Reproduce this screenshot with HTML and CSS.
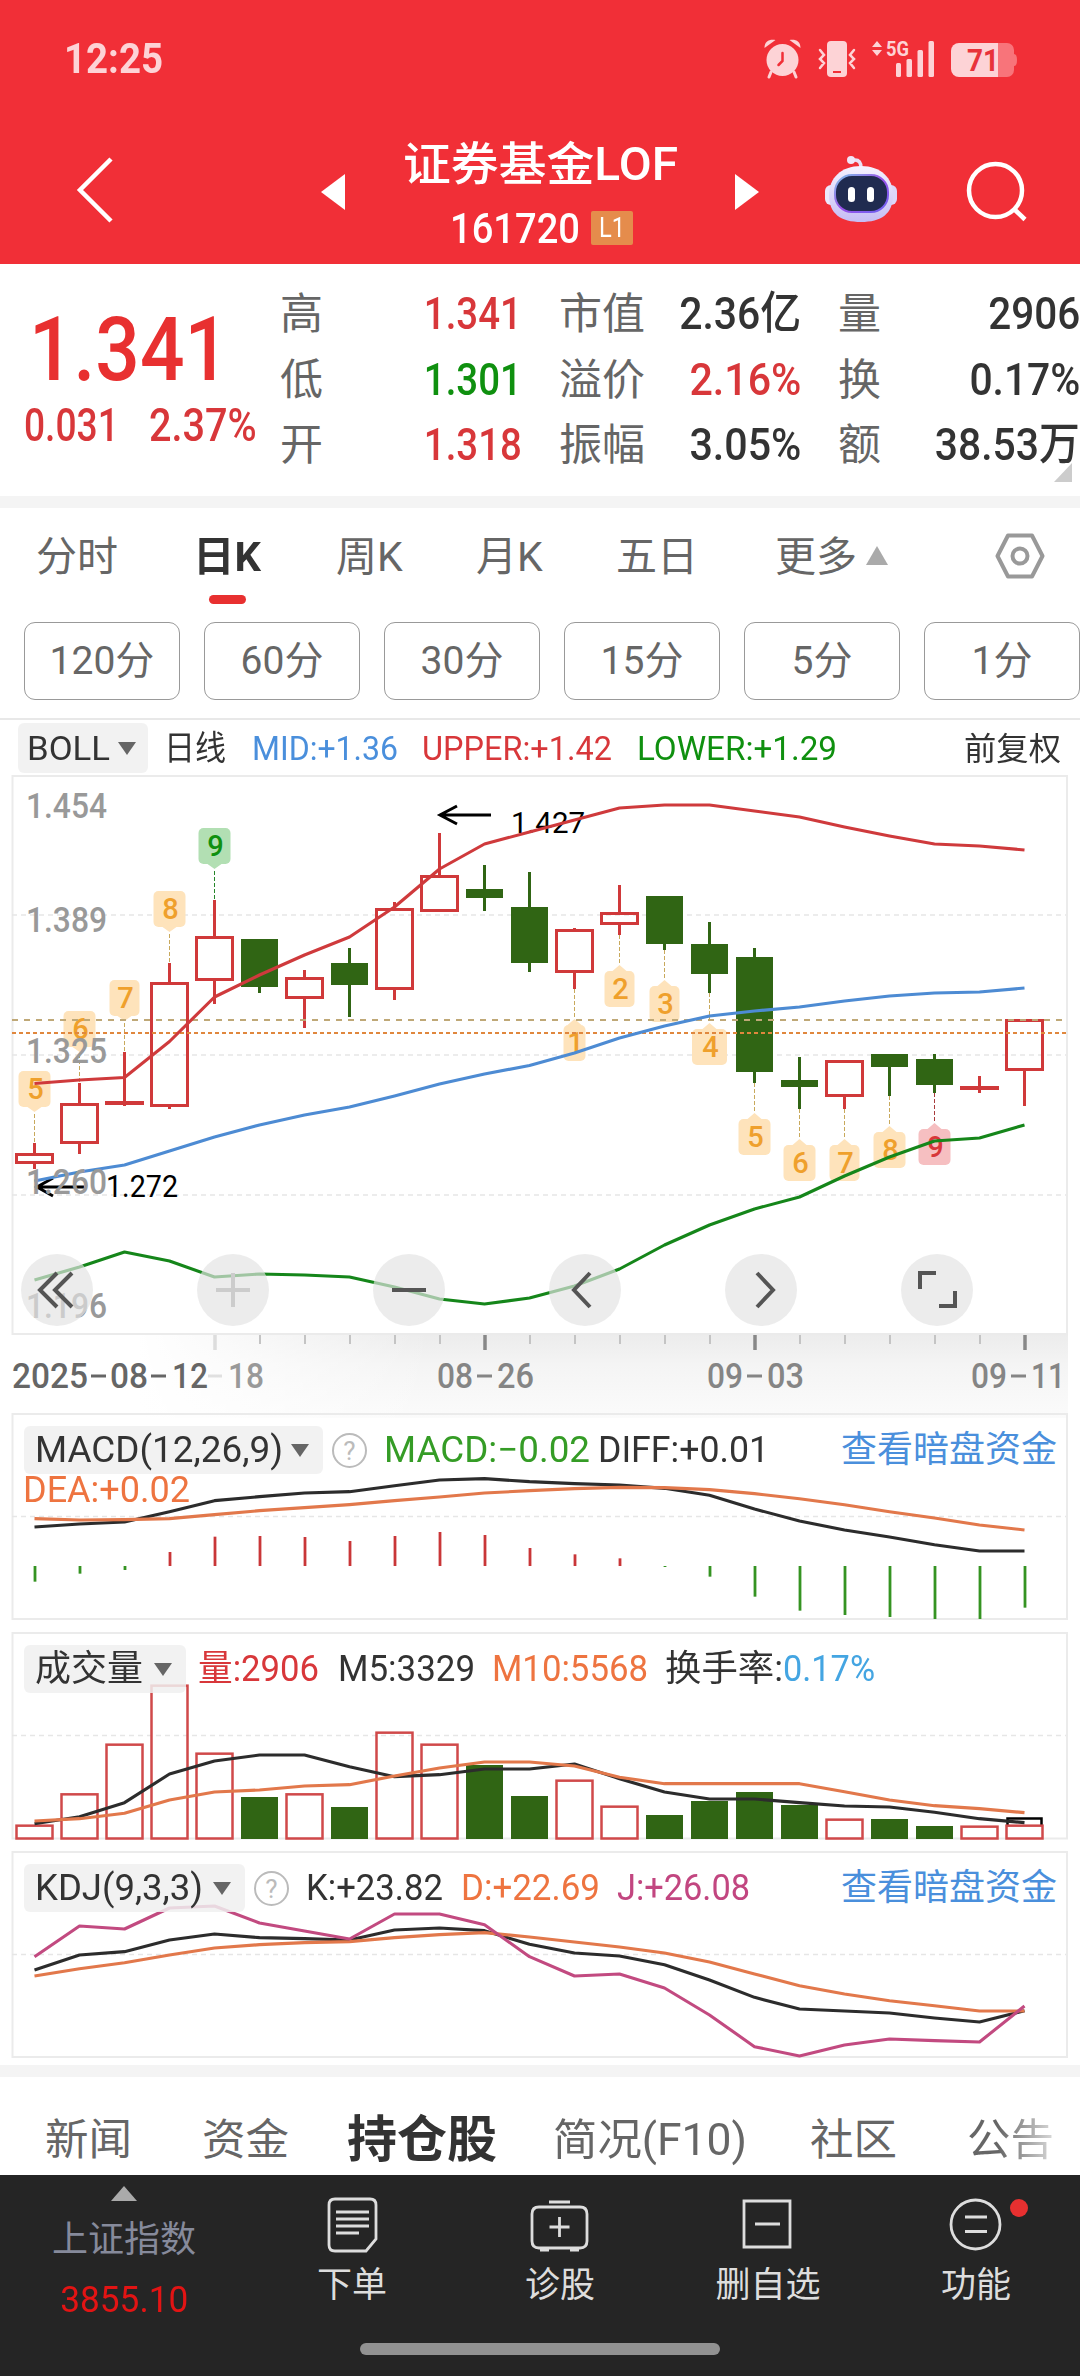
FILE: index.html
```html
<!DOCTYPE html>
<html lang="zh-CN">
<head>
<meta charset="utf-8">
<title>证券基金LOF 161720</title>
<link rel="stylesheet" href="styles.css">
</head>
<body>
<header class="top">
  <div class="status">
    <span class="time" data-w="99">12:25</span>
    <svg class="status-icons" width="260" height="42" viewBox="762 38 260 42">
      <g fill="#fdd3d6">
        <circle cx="782.500" cy="60" r="16"/>
        <path d="M764.500 48c0-7 5-9 11-8zM800.500 48c0-7-5-9-11-8z"/>
        <path d="M771 72l-2 5M794 72l2 5" stroke="#fdd3d6" stroke-width="3" stroke-linecap="round"/>
        <path d="M782.500 53v8l-4 4" fill="none" stroke="#f12f37" stroke-width="2.500" stroke-linecap="round"/>
        <rect x="827" y="41" width="20" height="36" rx="4"/>
        <path d="M833 72h8" stroke="#f12f37" stroke-width="2"/>
        <path d="M820 50l4 5-4 4 4 4-4 5M854 50l-4 5 4 4-4 4 4 5" fill="none" stroke="#fdd3d6" stroke-width="2.500" stroke-linecap="round"/>
        <path d="M872 47l5-6 5 6zM872 50h10l-5 6z"/>
        <rect x="896" y="63" width="5" height="14" rx="1.500"/><rect x="906.500" y="59" width="5.500" height="18" rx="1.500"/><rect x="917.500" y="50" width="5.500" height="27" rx="1.500"/><rect x="928.500" y="41" width="5.500" height="36" rx="1.500"/>
        <text x="886" y="56" font-size="21" font-weight="700" textLength="23" lengthAdjust="spacingAndGlyphs">5G</text>
        <path d="M998 43h9a7 7 0 0 1 7 7v4q3 0 3 6t-3 6v4a7 7 0 0 1-7 7h-9z" fill="#f8747a"/>
        <path d="M998 43h-39a8 8 0 0 0-8 8v18a8 8 0 0 0 8 8h39z"/>
        <text x="967" y="71" font-size="31" font-weight="700" fill="#e8323a" textLength="32" lengthAdjust="spacingAndGlyphs">71</text>
      </g>
    </svg>
  </div>
  <div class="nav">
    <svg class="back" width="42" height="70" viewBox="74 155 42 70"><path d="M111 159L80 190l31 31" fill="none" stroke="#fff" stroke-width="4.500"/></svg>
    <svg class="prev" width="24" height="36"><path d="M24 0v36L0 18z" fill="#fff"/></svg>
    <div class="title">
      <h1><span data-w="275">证券基金LOF</span></h1>
      <p><span class="code"><span data-w="130">161720</span></span><b class="badge"><span data-w="26">L1</span></b></p>
    </div>
    <svg class="next" width="24" height="36"><path d="M0 0v36l24-18z" fill="#fff"/></svg>
    <svg class="robot" width="74" height="68" viewBox="824 155 74 68">
      <defs>
        <linearGradient id="shell" x1="0" y1="0" x2="0" y2="1"><stop offset="0" stop-color="#f6f2ff"/><stop offset="1" stop-color="#c5bcf4"/></linearGradient>
        <linearGradient id="rim" x1="0" y1="0" x2="1" y2="1"><stop offset="0" stop-color="#7fc4e8"/><stop offset=".5" stop-color="#9a50e8"/><stop offset="1" stop-color="#6b62f0"/></linearGradient>
      </defs>
      <path d="M850 160h5q6 0 6 8" fill="none" stroke="#eadff5" stroke-width="3.500"/><circle cx="851" cy="160" r="4" fill="#f0e6f8"/>
      <rect x="825" y="185" width="14" height="20" rx="6" fill="#ece8fb"/><rect x="883" y="185" width="14" height="20" rx="6" fill="#ddd7fa"/>
      <path d="M861 166c20 0 32 12 32 29 0 19-12 27-32 27s-32-8-32-27c0-17 12-29 32-29z" fill="url(#shell)"/>
      <rect x="835" y="175" width="53" height="37" rx="17" fill="#202b50" stroke="url(#rim)" stroke-width="2"/>
      <rect x="848" y="187" width="7" height="15" rx="3.500" fill="#fff"/><rect x="867" y="187" width="7" height="15" rx="3.500" fill="#fff"/>
    </svg>
    <svg class="search" width="62" height="62" viewBox="965 161 62 62"><g fill="none" stroke="#fff" stroke-width="4.500"><circle cx="994.500" cy="190.500" r="26.500"/><path d="M1013.500 209.500L1024 219.500"/></g></svg>
  </div>
</header>

<section class="quote">
  <div class="last">
    <div class="price"><span data-w="200">1.341</span></div>
    <div class="change"><span data-w="101">0.031</span><span data-w="112">2.37%</span></div>
  </div>
  <dl class="stats">
    <dt>高</dt><dd class="red"><span data-w="98">1.341</span></dd><dt>市值</dt><dd><span data-w="122">2.36亿</span></dd><dt>量</dt><dd><span data-w="92">2906</span></dd>
    <dt>低</dt><dd class="green"><span data-w="98">1.301</span></dd><dt>溢价</dt><dd class="red"><span data-w="112">2.16%</span></dd><dt>换</dt><dd><span data-w="111">0.17%</span></dd>
    <dt>开</dt><dd class="red"><span data-w="98">1.318</span></dd><dt>振幅</dt><dd><span data-w="112">3.05%</span></dd><dt>额</dt><dd><span data-w="145">38.53万</span></dd>
  </dl>
  <i class="corner"></i>
</section>

<nav class="periods">
  <span>分时</span><span class="on"><b data-w="68">日K</b></span><span>周K</span><span>月K</span><span>五日</span><span class="more">更多<i></i></span>
  <svg width="52" height="52" viewBox="-26 -26 52 52"><g fill="none" stroke="#999" stroke-linejoin="round"><path d="M-22.500 0L-12-20.500H12L22.500 0 12 20.500H-12z" stroke-width="4"/><circle r="7.500" stroke-width="4"/></g></svg>
</nav>
<div class="minutes">
  <button>120分</button><button>60分</button><button>30分</button><button>15分</button><button>5分</button><button>1分</button>
</div>

<div class="legend boll">
  <div class="chip"><span data-w="83">BOLL</span><i></i></div>
  <span><span data-w="62">日线</span></span><span class="blue"><span data-w="146">MID:+1.36</span></span><span class="red"><span data-w="190">UPPER:+1.42</span></span><span class="green"><span data-w="200">LOWER:+1.29</span></span><span class="adj"><span data-w="97">前复权</span></span>
</div>

<section class="panel kline">
  <svg id="kline" width="1080" height="638" viewBox="0 776 1080 638"></svg>
  <div class="controls">
    <button><svg viewBox="-36 -36 72 72"><path d="M0-17l-17 17 17 17M15-17L-2 0l17 17"/></svg></button>
    <button class="off"><svg viewBox="-36 -36 72 72"><path d="M-17 0h34M0-17v34"/></svg></button>
    <button><svg viewBox="-36 -36 72 72"><path d="M-17 0h34"/></svg></button>
    <button><svg viewBox="-36 -36 72 72"><path d="M5-17l-16 17 16 17"/></svg></button>
    <button><svg viewBox="-36 -36 72 72"><path d="M-4-17l16 17-16 17"/></svg></button>
    <button><svg viewBox="-36 -36 72 72"><path d="M-17-1v-16H-1M18 1v15H2"/></svg></button>
  </div>
</section>

<section class="panel">
  <svg id="macd" width="1080" height="219" viewBox="0 1414 1080 219"></svg>
  <div class="legend macd">
    <div class="chip"><span data-w="248">MACD(12,26,9)</span><i></i></div><em>?</em><span class="leaf"><span data-w="206">MACD:−0.02</span></span><span><span data-w="171">DIFF:+0.01</span></span><a>查看暗盘资金</a>
  </div>
  <div class="dea"><span data-w="167">DEA:+0.02</span></div>
</section>

<section class="panel">
  <svg id="volume" width="1080" height="219" viewBox="0 1633 1080 219"></svg>
  <div class="legend vol">
    <div class="chip"><span data-w="108">成交量</span><i></i></div><span class="red"><span data-w="121">量:2906</span></span><span><span data-w="137">M5:3329</span></span><span class="orange"><span data-w="156">M10:5568</span></span><span><span data-w="118">换手率:</span></span><span class="sky"><span data-w="92">0.17%</span></span>
  </div>
</section>

<section class="panel">
  <svg id="kdj" width="1080" height="213" viewBox="0 1852 1080 213"></svg>
  <div class="legend kdj">
    <div class="chip"><span data-w="168">KDJ(9,3,3)</span><i></i></div><em>?</em><span><span data-w="137">K:+23.82</span></span><span class="orange"><span data-w="139">D:+22.69</span></span><span class="plum"><span data-w="133">J:+26.08</span></span><a>查看暗盘资金</a>
  </div>
</section>

<nav class="sections">
  <span>新闻</span><span>资金</span><b>持仓股</b><span><span data-w="194">简况(F10)</span></span><span>社区</span><span class="fade">公告</span>
</nav>

<footer class="dock">
  <div class="index"><i></i><span>上证指数</span><strong data-w="128">3855.10</strong></div>
  <div class="act"><svg width="64" height="60" viewBox="320 2196 64 60"><path d="M335 2200h35q6 0 6 6v34l-10 12h-31q-6 0-6-6v-40q0-6 6-6zM336 2213h33M336 2220h33M336 2227h33M336 2234h23"/></svg><span>下单</span></div>
  <div class="act"><svg width="64" height="60" viewBox="528 2196 64 60"><path d="M549 2203h21M539 2208h41q7 0 7 7v27q0 7-7 7h-41q-7 0-7-7v-27q0-7 7-7zM540 2251h9M570 2251h9M559.500 2218v20M549.500 2228h20"/></svg><span>诊股</span></div>
  <div class="act"><svg width="64" height="60" viewBox="736 2196 64 60"><path d="M744 2202h46v46h-46zM755 2225h25"/></svg><span>删自选</span></div>
  <div class="act"><svg width="64" height="60" viewBox="944 2196 64 60"><circle cx="975.500" cy="2225.500" r="24.500"/><path d="M965 2218h22M965 2232.500h22"/></svg><span>功能</span><i class="dot"></i></div>
  <div class="home"></div>
</footer>
<script src="chart.js"></script>
</body>
</html>
```
FILE: styles.css
```css
* { box-sizing: border-box; }
body, h1, p, dl, dd { margin: 0; }
body {
  width: 1080px;
  height: 2376px;
  overflow: hidden;
  background: #fff;
  color: #333;
  font-family: Roboto, "Noto Sans CJK SC", sans-serif;
  font-size: 36px;
  white-space: nowrap;
}
button { margin: 0; padding: 0; font: inherit; color: inherit; }
i, em { font-style: normal; }
svg text { font-family: Roboto, "Noto Sans CJK SC", sans-serif; }
[data-w] { display: inline-block; transform-origin: left center; }

.red { color: #d8373a; }
.green { color: #0f900f; }
.blue { color: #4a8fdc; }
.leaf { color: #359c26; }
.orange { color: #ee7440; }
.sky { color: #44a5e2; }
.plum { color: #c24680; }

/* header */
.top { height: 264px; background: #f12f37; color: #fff; }
.status { display: flex; height: 118px; padding: 0 58px 0 64px; justify-content: space-between; align-items: center; }
.time { font-size: 42px; font-weight: 700; line-height: 50px; color: #fdd3d6; }
.nav { display: grid; height: 146px; grid-template-columns: 74px 247px 75px 339px 90px 141px 114px; align-items: start; }
.nav .back { grid-column: 2; margin-top: 37px; }
.nav .prev, .nav .next { margin-top: 56px; }
.nav .robot { margin-top: 37px; margin-left: -1px; }
.nav .search { margin-top: 43px; }
.title { padding-top: 16px; padding-left: 7px; }
.title h1 { height: 63px; font-size: 46px; line-height: 60px; font-weight: 500; }
.title p { display: flex; height: 62px; padding-left: 47px; align-items: center; }
.code { width: 141px; font-size: 43px; font-weight: 500; line-height: 60px; }
.badge { width: 42px; height: 34px; padding-left: 8px; background: #e58c4c; border-radius: 2px; font-size: 28px; line-height: 34px; font-weight: 400; }

/* quote */
.quote { position: relative; display: flex; height: 232px; padding-top: 16px; }
.last { width: 280px; padding: 14px 0 0 24px; color: #d8373a; }
.price { padding-left: 5px; height: 111px; font-size: 89px; line-height: 112px; font-weight: 500; color: #e83030; }
.change { display: grid; grid-template-columns: 125px 130px; height: 40px; line-height: 40px; font-size: 46px; font-weight: 500; }
.stats { display: grid; width: 800px; grid-template-columns: 62px 180px 37px 100px 142px 37px 62px 180px; grid-auto-rows: 65.5px; line-height: 67px; }
.stats dt { padding-top: 1px; font-size: 43px; color: #666; }
.stats dt:nth-of-type(3n+2) { grid-column: 4; }
.stats dt:nth-of-type(3n) { grid-column: 7; }
.stats dd { text-align: right; font-size: 45px; font-weight: 500; }
.stats [data-w] { transform-origin: right center; }
.corner { position: absolute; right: 8px; bottom: 14px; border: solid transparent; border-width: 0 0 19px 18px; border-bottom-color: #ccc; }

/* chart period tabs */
.periods { display: grid; height: 126px; padding-left: 36px; border-top: 12px solid #f4f4f4; grid-template-columns: 160px 140px 140px 140px 159px 219px 60px; font-size: 41px; line-height: 99px; color: #666; }
.periods .on { position: relative; color: #333; }
.periods .on::after { content: ""; position: absolute; left: 13px; top: 87px; width: 37px; height: 9px; border-radius: 5px; background: #e83030; }
.periods b { margin-left: -3px; font-weight: 700; }
.more i { display: inline-block; margin-left: 9px; vertical-align: 6px; border: solid transparent; border-width: 0 11px 19px; border-bottom-color: #aaa; }
.periods svg { margin-top: 22px; }
.minutes { display: flex; height: 96px; padding-left: 24px; gap: 24px; overflow: hidden; }
.minutes button { flex: 0 0 156px; height: 78px; border: 1.5px solid #999; border-radius: 11px; background: #fff; font-size: 39px; line-height: 76px; color: #666; }

/* legends */
.legend { display: grid; align-items: center; font-size: 36px; line-height: 50px; }
.chip { display: flex; height: 48px; justify-content: space-between; align-items: center; padding: 0 14px 0 11px; border-radius: 6px; background: rgba(240, 240, 240, .85); }
.chip i { flex: none; border: solid transparent; border-width: 13px 9.5px 0; border-top-color: #666; }
.legend em { width: 35px; height: 35px; border: 2px solid #bbb; border-radius: 50%; color: #bbb; font-size: 26px; line-height: 32px; text-align: center; }
.legend a { color: #4a8fdc; font-size: 36px; }
.boll { height: 58px; padding-left: 18px; border-top: 2px solid #e8e8e8; grid-template-columns: 146px 88px 170px 215px 327px 100px; font-size: 34px; line-height: 50px; }
.boll .chip { width: 130px; height: 50px; padding: 0 12px 0 9px; }
.boll .adj { font-size: 32px; padding-top: 2px; }
.panel { position: relative; }
.panel > svg { display: block; overflow: visible; }
.panel .legend, .dea { position: absolute; top: 11px; left: 24px; }
.macd { grid-template-columns: 308px 52px 214px 243px 216px; }
.macd .chip { width: 299px; }
.dea { top: 53px; line-height: 46px; color: #ee7440; }
.dea span { margin-left: -1px; }
.vol { grid-template-columns: 174px 140px 154px 173px 118px 100px; }
.vol .chip { width: 162px; }
.kdj { grid-template-columns: 230px 52px 155px 156px 224px 216px; }
.kdj .chip { width: 221px; }
.controls { position: absolute; left: 21px; top: 478px; display: flex; gap: 104px; }
.controls button { width: 72px; height: 72px; border: 0; border-radius: 50%; background: rgba(227, 227, 227, .68); }
.controls svg { display: block; width: 72px; height: 72px; fill: none; stroke: #555; stroke-width: 4; }
.controls .off svg { stroke: #ccc; }

/* chart marks */
.frame { fill: none; stroke: #ebebeb; stroke-width: 2; }
.grid { stroke: #e6e6e6; stroke-width: 1.500; stroke-dasharray: 5 4; }
.up { fill: none; stroke: #d0393a; stroke-width: 3; }
.upwick { stroke: #d0393a; stroke-width: 3; }
.down { fill: #306514; }
.downwick { stroke: #306514; stroke-width: 3; }
.line { fill: none; stroke-width: 3.100; stroke-linejoin: round; }
.axis { font-size: 35px; font-weight: 500; fill: #999; }

/* bottom */
.sections { display: grid; height: 110px; border-top: 12px solid #f4f4f4; padding-left: 45px; grid-template-columns: 157px 145px 206px 257px 157px 100px; font-size: 43.500px; line-height: 127px; color: #666; }
.sections b { font-size: 50px; font-weight: 700; color: #333; }
.fade { width: 88px; background: linear-gradient(90deg, #666 35%, #ddd); background-clip: text; -webkit-background-clip: text; color: transparent; }
.dock { position: relative; display: grid; height: 201px; grid-template-columns: 248px 208px 208px 208px 208px; background: #252525; color: #ddd; }
.index { display: flex; flex-direction: column; align-items: center; padding-top: 11px; color: #868a9b; }
.index i { border: solid transparent; border-width: 0 13px 15px; border-bottom-color: #aaa; }
.index span { margin-top: 14px; line-height: 50px; }
.index strong { margin-top: 10px; font-weight: 400; line-height: 50px; color: #e21414; font-size: 37px; transform-origin: center; }
.act { position: relative; display: flex; flex-direction: column; align-items: center; padding-top: 20px; font-size: 35px; }
.act svg { fill: none; stroke: #ddd; stroke-width: 2.800; }
.act span { line-height: 61px; }
.dot { position: absolute; left: 138px; top: 24px; width: 18px; height: 18px; border-radius: 50%; background: #e83030; }
.home { position: absolute; left: 360px; bottom: 21px; width: 360px; height: 12px; border-radius: 6px; background: #929292; }
```
FILE: chart.js
```js
document.querySelectorAll('[data-w]').forEach(function (el) {
  el.style.transform = 'scaleX(' + (el.dataset.w / el.getBoundingClientRect().width).toFixed(4) + ')';
});

var X = function (i) { return 34.5 + 45 * i; };
function path(points, color) {
  return '<polyline class="line" stroke="' + color + '" points="' +
    points.map(function (y, i) { return X(i) + ',' + y; }).join(' ') + '"/>';
}
function seg(x1, y1, x2, y2, attrs) {
  return '<line x1="' + x1 + '" y1="' + y1 + '" x2="' + x2 + '" y2="' + y2 + '" ' + attrs + '/>';
}
function label(s, x, y, w, attrs) {
  return '<text x="' + x + '" y="' + y + '" textLength="' + w + '" lengthAdjust="spacingAndGlyphs" ' + attrs + '>' + s + '</text>';
}
function frame(top, bottom) {
  return '<rect class="frame" x="12.5" y="' + top + '" width="1054.5" height="' + (bottom - top) + '"/>';
}
function grid(y) { return seg(12, y, 1066, y, 'class="grid"'); }

// [direction, body top, body bottom, high, low]
var candles = [
  ['u',1153,1164,1143,1169],['u',1103,1144,1083,1154],['x',1101,1105,1052,1106],['u',982,1107,963,1109],
  ['u',936,981,900,1004],['d',939,987,939,993],['u',977,999,970,1028],['d',963,985,948,1017],
  ['u',908,990,902,1000],['u',875,912,833,912],['d',889,898,865,911],['d',907,963,872,972],
  ['u',929,973,928,989],['u',912,925,885,935],['d',896,944,896,950],['d',944,974,922,993],
  ['d',957,1072,948,1083],['d',1080,1087,1057,1109],['u',1060,1097,1060,1109],['d',1054,1067,1054,1096],
  ['d',1059,1085,1054,1093],['x',1086,1090,1076,1093],['u',1019,1071,1019,1106]
];
// [index, digit, box top, width, wick end, fill, ink, stem]
var amber = ['#fee3bb', '#efa02c', '#c8a95c'];
var marks = [
  [0,5,1071,32,1143],[1,6,1011,32,1083],[2,7,980,30,1052],[3,8,891,32,963],[4,9,828,32,900,'#b2dfb3','#0f900f','#26862a'],
  [12,1,1025,22,989],[13,2,971,30,935],[14,3,986,30,950],[15,4,1029,35,993],[16,5,1119,32,1083],
  [17,6,1145,32,1109],[18,7,1145,30,1109],[19,8,1132,32,1096],[20,9,1129,32,1093,'#f6bfc1','#d8373a','#a83c3c']
];

var s = '<defs><linearGradient id="shade" x1="0" y1="0" x2="0" y2="1"><stop offset="0" stop-color="#ececec"/><stop offset=".35" stop-color="#f4f4f4"/><stop offset="1" stop-color="#fbfbfb"/></linearGradient>' +
  '<linearGradient id="veil"><stop offset="0" stop-color="#fff"/><stop offset=".3" stop-color="#fff"/><stop offset="1" stop-color="#fff" stop-opacity="0"/></linearGradient></defs>';
s += '<rect x="12" y="1335" width="1056" height="83" fill="url(#shade)"/><rect x="12" y="1335" width="420" height="83" fill="url(#veil)"/>';
s += frame(776, 1334) + grid(915) + grid(1055) + grid(1195);
s += seg(12, 1020, 1066, 1020, 'stroke="#bfa877" stroke-width="2" stroke-dasharray="6 6"');
s += seg(12, 1033, 1066, 1033, 'stroke="#e0873d" stroke-width="2" stroke-dasharray="4 3"');
candles.forEach(function (c, i) {
  var x = X(i);
  if (c[0] === 'u') {
    s += seg(x, c[3], x, c[1] + 1, 'class="upwick"') + seg(x, c[2] - 1, x, c[4], 'class="upwick"');
    s += '<rect class="up" x="' + (x - 18) + '" y="' + (c[1] + 1.5) + '" width="36" height="' + (c[2] - c[1] - 3) + '"/>';
  } else {
    var k = c[0] === 'd' ? 'down' : 'up';
    s += seg(x, c[3], x, c[4], 'class="' + k + 'wick"');
    s += k === 'down' ? '<rect class="down" x="' + (x - 18.5) + '" y="' + c[1] + '" width="37" height="' + (c[2] - c[1]) + '"/>'
      : '<rect fill="#d0393a" x="' + (x - 19.5) + '" y="' + c[1] + '" width="39" height="4"/>';
  }
});
marks.forEach(function (m) {
  var x = X(m[0]), y = m[2], w = m[3], fill = m[5] || amber[0], ink = m[6] || amber[1], up = m[4] > y;
  var tip = up ? y + 41 : y - 6;
  s += seg(x, up ? tip + 2 : m[4], x, up ? m[4] : tip - 1, 'stroke="' + (m[7] || amber[2]) + '" stroke-dasharray="4 2"');
  s += '<g fill="' + fill + '"><rect x="' + (x - w / 2) + '" y="' + y + '" width="' + w + '" height="36" rx="5"/>';
  s += '<path d="M' + (x - 7) + ' ' + (up ? y + 36 : y) + 'h14L' + x + ' ' + tip + 'z"/></g>';
  s += '<text x="' + (x + 1) + '" y="' + (y + 28) + '" font-size="29" font-weight="500" text-anchor="middle" fill="' + ink + '">' + m[1] + '</text>';
});
// the price lines stay visible across the markers
s += seg(12, 1020, 1066, 1020, 'stroke="#bfa877" stroke-width="2" stroke-dasharray="6 6"');
s += seg(12, 1033, 1066, 1033, 'stroke="#e0873d" stroke-width="2" stroke-dasharray="4 3"');
var arrow = 'fill="none" stroke="#000" stroke-width="3"';
s += '<path ' + arrow + ' d="M440 815h51M457 806l-17 9 17 9"/>' + label('1.427', 511, 833, 74, 'font-size="30"');
s += '<path ' + arrow + ' d="M37 1187h47M53 1178l-16 9 16 9"/>' + label('1.272', 106, 1197, 72, 'font-size="31"');
s += path([1083.5,1080,1077.5,1041.5,997,975,955,937,907,869,844,832,820,808,805,805,811,817,827,836,844,846,850], '#cf3a3c');
s += path([1181,1172,1165,1151,1137,1125,1115,1107,1096,1084,1074,1065.5,1053,1038,1026,1016,1011,1007,1001,996,993,992,988], '#4d8bd3');
s += path([1280,1267,1252,1261,1277,1274,1275,1277,1287,1299,1304,1298,1286,1269,1245,1225,1209,1197,1176,1157,1141,1138,1125], '#15861a');
[['1.454',818],['1.389',932],['1.325',1063],['1.260',1194],['1.196',1317.5]].forEach(function (a) { s += label(a[0], 26, a[1], 81, 'class="axis"'); });
for (var i = 4; i < 23; i++) {
  var major = (i - 4) % 6 === 0;
  s += seg(X(i) + .5, 1335, X(i) + .5, major ? 1350 : 1344, 'stroke="' + (i === 4 ? '#ddd' : major ? '#888' : '#c4c4c4') + '" stroke-width="' + (major ? 3.5 : 2) + '"');
}
var d = 'font-size="35" font-weight="500" fill=';
s += seg(208, 1376, 222, 1376, 'stroke="#e0e0e0" stroke-width="3"') + label('18', 228, 1388, 36, d + '"#999"');
s += label('2025', 12, 1388, 76, d + '"#666"') + label('08', 110, 1388, 38, d + '"#666"') + label('12', 172, 1388, 36, d + '"#666"');
[[437,'08','26'],[707,'09','03'],[971,'09','11']].forEach(function (t) {
  s += label(t[1], t[0], 1388, 36, d + '"#858585"') + label(t[2], t[0] + 60, 1388, t[2] === '11' ? 34 : 37, d + '"#858585"');
  s += seg(t[0] + 40, 1376, t[0] + 55, 1376, 'stroke="#858585" stroke-width="3"');
});
s += seg(91, 1376, 106, 1376, 'stroke="#666" stroke-width="3"') + seg(151, 1376, 166, 1376, 'stroke="#666" stroke-width="3"');
document.getElementById('kline').innerHTML = s;

function at(base, values) { return values.map(function (v) { return base + v / 3; }); }

// MACD
s = frame(1414, 1619) + grid(1516.5);
at(1400, [545,521,510,456,410,408,411,423,408,396,405,444,463,475,501,530,590,632,645,651,657,657,623]).forEach(function (y, i) {
  s += seg(X(i) + .5, 1566, X(i) + .5, y, 'stroke-width="2.8" stroke="' + (y < 1566 ? '#c93638' : '#359322') + '"');
});
s += path(at(1400, [381,372,366,335,302,290,279,275,257,240,236,245,251,255,265,286,327,363,390,411,434,453,453]), '#2c2c2c');
s += path(at(1400, [356,360,359,356,344,332,323,314,302,291,279,272,266,262,263,269,281,296,314,335,354,375,390]), '#e2784b');
document.getElementById('macd').innerHTML = s;

// Volume
s = frame(1633, 1838.5) + grid(1735.5);
var falling = [5, 7, 10, 11, 14, 15, 16, 17, 19, 20];
s += '<rect x="1007.500" y="1818.500" width="34" height="12" fill="none" stroke="#000" stroke-width="2.500"/>';
at(1620, [617,523,374,197,401,531,523,561,338,374,435,528,482,560,585,543,516,555,599,597,618,620,617]).forEach(function (y, i) {
  s += falling.indexOf(i) >= 0 ? '<rect class="down" x="' + (X(i) - 18.5) + '" y="' + y + '" width="37" height="' + (1839 - y) + '"/>'
    : '<rect fill="' + (i === 22 ? '#fff' : 'none') + '" stroke="#d0494a" stroke-width="2.5" x="' + (X(i) - 18) + '" y="' + y + '" width="36" height="' + (1838.5 - y) + '"/>';
});
s += path(at(1620, [611,590,548,462,423,405,405,440,470,464,447,447,432,476,516,537,537,548,558,561,577,596,608]), '#2c2c2c');
s += path(at(1620, [603,596,580,540,516,510,498,494,468,444,426,426,438,472,491,491,491,491,515,540,557,566,578]), '#e2784b');
document.getElementById('volume').innerHTML = s;

// KDJ
s = frame(1852, 2057) + grid(1954.5);
s += path(at(1840, [390,345,335,300,282,293,296,300,270,264,272,313,339,348,374,420,472,507,513,519,534,546,512]), '#2c2c2c');
s += path(at(1840, [408,386,368,345,324,314,308,305,293,284,278,291,306,321,339,366,402,437,462,482,497,513,513]), '#e2784b');
s += path(at(1840, [350,258,267,204,198,249,273,297,222,222,254,350,408,402,444,525,620,648,615,597,602,606,498]), '#c24a80');
document.getElementById('kdj').innerHTML = s;
```
